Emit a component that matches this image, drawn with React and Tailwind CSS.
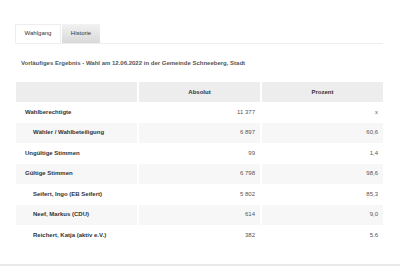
import React from 'react';

const rows = [
    { label: 'Wahlberechtigte', abs: '11 377', pct: 'x', indent: false },
    { label: 'Wähler / Wahlbeteiligung', abs: '6 897', pct: '60,6', indent: true },
    { label: 'Ungültige Stimmen', abs: '99', pct: '1,4', indent: false },
    { label: 'Gültige Stimmen', abs: '6 798', pct: '98,6', indent: false },
    { label: 'Seifert, Ingo (EB Seifert)', abs: '5 802', pct: '85,3', indent: true },
    { label: 'Neef, Markus (CDU)', abs: '614', pct: '9,0', indent: true },
    { label: 'Reichert, Katja (aktiv e.V.)', abs: '382', pct: '5,6', indent: true },
];

const App = () => {
    return (
        <div className="w-[400px] h-[267px] bg-white font-['Liberation_Sans',Arial,sans-serif] text-[#333]">
            <div className="h-[266px] border-b-2 border-[#e9e9e9] pt-[24px] pl-[15px] pr-[17px]">
                {/* tabs */}
                <div className="flex border-b border-[#eeeeee]">
                    <div className="w-[46px] h-[19px] -mb-px flex items-center justify-center bg-white border border-[#eeeeee] border-b-white text-[6px]">
                        Wahlgang
                    </div>
                    <div className="w-[38px] h-[19px] ml-px flex items-center justify-center bg-gradient-to-b from-[#f2f2f2] to-[#d9d9d9] text-[6px]">
                        Historie
                    </div>
                </div>

                <p className="mt-[14px] pl-[6px] text-[6px] leading-[10px] font-bold text-[#555]">
                    Vorläufiges Ergebnis - Wahl am 12.06.2022 in der Gemeinde Schneeberg, Stadt
                </p>

                <div className="mt-[14px] ml-px text-[6px]">
                    <div className="grid grid-cols-3 gap-x-[2px] h-[20px] font-bold">
                        <div className="bg-[#ededed]"></div>
                        <div className="bg-[#ededed] flex items-center justify-center">Absolut</div>
                        <div className="bg-[#ededed] flex items-center justify-center">Prozent</div>
                    </div>
                    {rows.map((r, i) => (
                        <div key={r.label} className="grid grid-cols-3 gap-x-[2px] h-[20.5px]">
                            <div className={`${i % 2 ? 'bg-[#f7f7f7]' : 'bg-white'} flex items-center font-bold ${r.indent ? 'pl-[17px]' : 'pl-[9px]'}`}>
                                {r.label}
                            </div>
                            <div className={`${i % 2 ? 'bg-[#f7f7f7]' : 'bg-white'} flex items-center justify-end pr-[5px] text-[#555]`}>
                                {r.abs}
                            </div>
                            <div className={`${i % 2 ? 'bg-[#f7f7f7]' : 'bg-white'} flex items-center justify-end pr-[5px] text-[#555]`}>
                                {r.pct}
                            </div>
                        </div>
                    ))}
                </div>
            </div>
        </div>
    );
};

export default App;
